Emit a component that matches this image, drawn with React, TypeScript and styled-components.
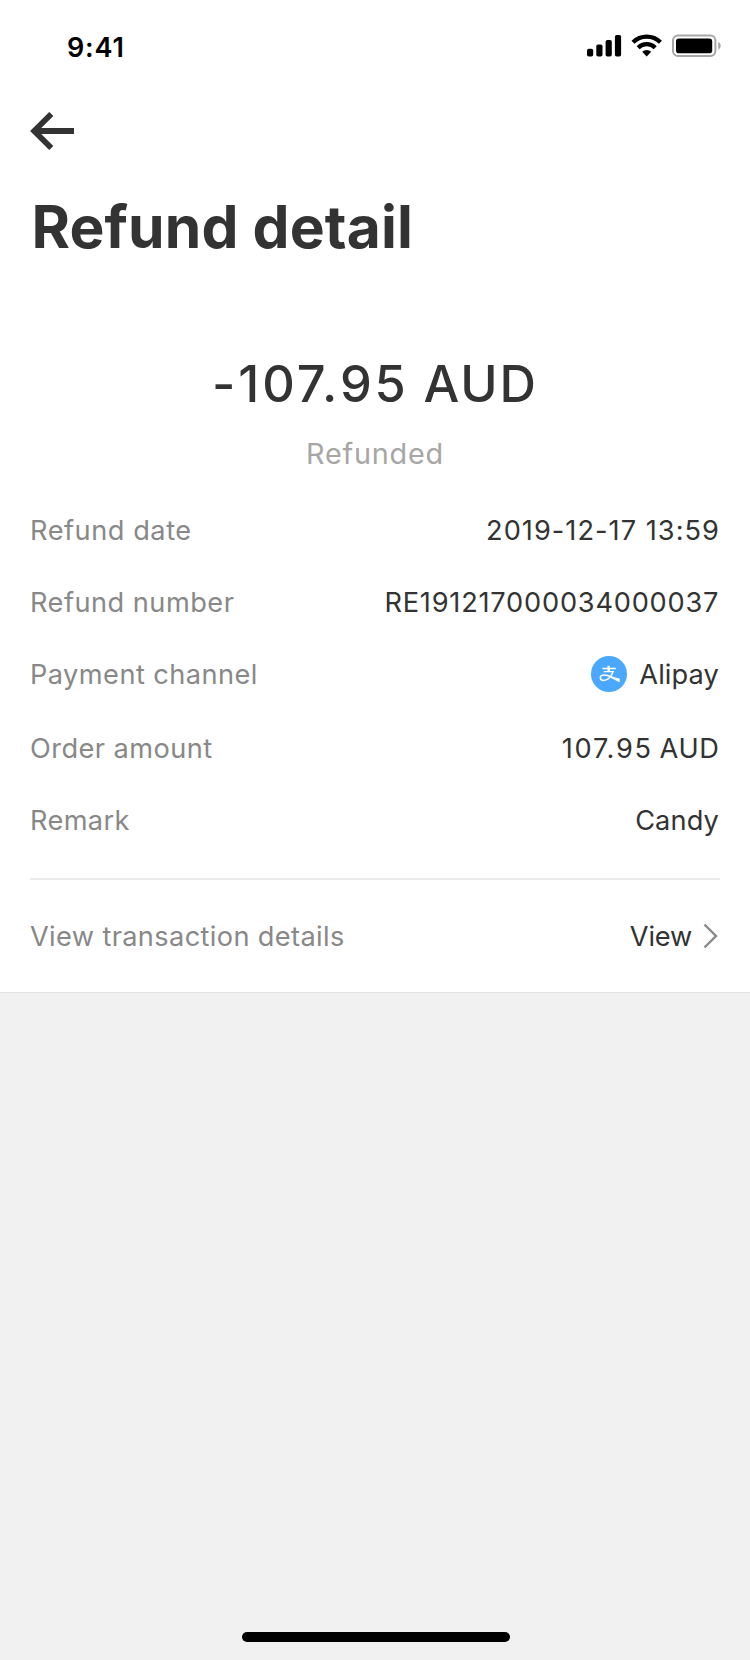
import React from 'react';
import styled, { createGlobalStyle } from 'styled-components';

const GlobalStyle = createGlobalStyle`
  * {
    box-sizing: border-box;
  }
  body {
    margin: 0;
    background: #f1f1f1;
    font-family: Inter, 'Liberation Sans', sans-serif;
    color: #333;
  }
`;

const Screen = styled.div`
  display: flex;
  flex-direction: column;
  width: 750px;
  height: 1660px;
  background: #f1f1f1;
`;

const Sheet = styled.main`
  background: #fff;
  border-bottom: 1px solid #e2e2e2;
`;

const StatusBar = styled.header`
  display: flex;
  justify-content: space-between;
  height: 94px;
  padding: 0 29.5px 0 67px;
`;

const Clock = styled.span`
  font-size: 27px;
  font-weight: 600;
  line-height: 96px;
  letter-spacing: 0.85px;
  color: #000;
`;

const StatusIcons = styled.div`
  display: flex;
  align-items: flex-start;
  padding-top: 34px;
`;

const NavBar = styled.nav`
  display: flex;
  align-items: center;
  height: 74px;
  padding: 0 30px;
`;

const BackButton = styled.button`
  display: flex;
  padding: 0;
  border: 0;
  background: none;
`;

const Title = styled.h1`
  margin: 17px 0 0;
  padding: 0 31.5px;
  font-size: 58.7px;
  font-weight: 700;
  line-height: 84px;
  letter-spacing: 0.14px;
`;

const Summary = styled.section`
  margin-top: 83px;
  text-align: center;
`;

const Amount = styled.div`
  font-size: 50.5px;
  font-weight: 500;
  line-height: 64px;
  letter-spacing: 2.9px;
  word-spacing: -1.5px;
`;

const Currency = styled.span<{ $spacing: number }>`
  letter-spacing: ${({ $spacing }) => $spacing}px;
`;

const Status = styled.div`
  margin-top: 18px;
  font-size: 28.8px;
  line-height: 40px;
  letter-spacing: 0.8px;
  color: #a6a6a6;
`;

const Details = styled.dl`
  margin: 20px 30px 0;
  padding-bottom: 22px;
  border-bottom: 2px solid #ebebeb;
`;

const Row = styled.div<{ $height?: number; $lift?: number }>`
  display: flex;
  align-items: center;
  justify-content: space-between;
  height: ${({ $height = 72 }) => $height}px;
  padding-bottom: ${({ $lift = 0 }) => $lift}px;
  font-size: 27.2px;
`;

const ViewRow = styled(Row)`
  margin: 0 30px;
`;

const Label = styled.dt<{ $spacing: number }>`
  letter-spacing: ${({ $spacing }) => $spacing}px;
  color: #888;
`;

const Value = styled.dd<{ $spacing: number; $end?: number }>`
  display: flex;
  align-items: center;
  margin: 0 ${({ $end = 0 }) => $end}px 0 0;
  letter-spacing: ${({ $spacing }) => $spacing}px;
`;

const RowAmount = styled.span`
  word-spacing: -2.5px;
`;

const ChannelIcon = styled.svg`
  margin-right: 12px;
`;

const Chevron = styled.svg`
  margin-left: 11px;
`;

const HomeArea = styled.footer`
  display: flex;
  justify-content: center;
  margin-top: auto;
  padding: 0 0 18px 2px;
`;

const HomeIndicator = styled.div`
  width: 268px;
  height: 10px;
  border-radius: 5px;
  background: #000;
`;

const SystemIcons = () => (
  <svg width="134" height="24" viewBox="0 0 134 24">
    <rect x="0" y="14.8" width="6.2" height="7.8" rx="1.8" />
    <rect x="9.3" y="10.5" width="6.2" height="12.1" rx="1.8" />
    <rect x="18.6" y="6" width="6.2" height="16.6" rx="1.8" />
    <rect x="27.9" y="1" width="6.2" height="21.6" rx="1.8" />
    <g fill="none" stroke="#000" strokeWidth="4.2">
      <path d="M46 8.3a19.2 19.2 0 0 1 27.4 0" />
      <path d="M51.2 13.7a12 12 0 0 1 17 0" />
    </g>
    <path d="M59.7 22.6l-4.5-4.8a6.6 6.6 0 0 1 9 0z" />
    <rect x="86" y="1.5" width="42.4" height="20.6" rx="5" fill="none" stroke="#a6a6a6" strokeWidth="2" />
    <rect x="89" y="4.6" width="36.2" height="14.6" rx="2.8" />
    <path d="M131.2 8v7.6c1.5-.6 2.5-2.1 2.5-3.8s-1-3.2-2.5-3.8z" fill="#a6a6a6" />
  </svg>
);

const BackIcon = () => (
  <svg width="45" height="38" viewBox="0 0 45 38" fill="none" stroke="#333" strokeWidth="5.8">
    <path d="M44 19H6M21.3 2L4.2 19l17.1 17" />
  </svg>
);

const AlipayIcon = () => (
  <ChannelIcon width="36" height="36" viewBox="0 0 36 36">
    <circle cx="18" cy="18" r="18" fill="#4aa8ff" />
    <g fill="none" stroke="#fff">
      <path d="M11.4 12.5H24.8M12.7 15.7H22.9" strokeWidth="1.3" />
      <path d="M17.7 9.8V15.7" strokeWidth="2.4" />
      <path
        d="M22 15.3C21 19.5 17.5 24.5 12.7 24.5C10.5 24.5 9.3 23.3 9.3 21.8C9.3 20 10.8 18.9 13 18.9C16 18.9 18.5 20.1 21 21.3"
        strokeWidth="1.5"
      />
    </g>
    <path d="M19.5 19.8C23 21.3 25.5 22 28.7 22.4V26.2C25.5 25.1 22.6 23.4 19 21.6z" fill="#fff" />
  </ChannelIcon>
);

export default function App() {
  return (
    <>
      <GlobalStyle />
      <Screen>
        <Sheet>
          <StatusBar>
            <Clock>9:41</Clock>
            <StatusIcons>
              <SystemIcons />
            </StatusIcons>
          </StatusBar>
          <NavBar>
            <BackButton aria-label="Back">
              <BackIcon />
            </BackButton>
          </NavBar>
          <Title>Refund detail</Title>
          <Summary>
            <Amount>
              -107.95 <Currency $spacing={1.9}>AUD</Currency>
            </Amount>
            <Status>Refunded</Status>
          </Summary>
          <Details>
            <Row>
              <Label $spacing={0.53}>Refund date</Label>
              <Value $spacing={1.03} $end={0}>2019-12-17 13:59</Value>
            </Row>
            <Row>
              <Label $spacing={0.48}>Refund number</Label>
              <Value $spacing={0.78} $end={0.8}>RE191217000034000037</Value>
            </Row>
            <Row $height={74} $lift={2}>
              <Label $spacing={0.44}>Payment channel</Label>
              <Value $spacing={0.12} $end={1}>
                <AlipayIcon />
                Alipay
              </Value>
            </Row>
            <Row>
              <Label $spacing={0.44}>Order amount</Label>
              <Value $spacing={1.7} $end={0.5}>
                <RowAmount>
                  107.95 <Currency $spacing={0.6}>AUD</Currency>
                </RowAmount>
              </Value>
            </Row>
            <Row>
              <Label $spacing={0.35}>Remark</Label>
              <Value $spacing={0.12} $end={1}>Candy</Value>
            </Row>
          </Details>
          <ViewRow as="section" $height={112}>
            <Label as="span" $spacing={0.36}>View transaction details</Label>
            <Value as="span" $spacing={-0.2} $end={2}>
              View
              <Chevron width="15" height="26" viewBox="0 0 15 26" fill="none" stroke="#888" strokeWidth="2.4">
                <path d="M1.5 1.5L13 13L1.5 24.5" />
              </Chevron>
            </Value>
          </ViewRow>
        </Sheet>
        <HomeArea>
          <HomeIndicator />
        </HomeArea>
      </Screen>
    </>
  );
}
